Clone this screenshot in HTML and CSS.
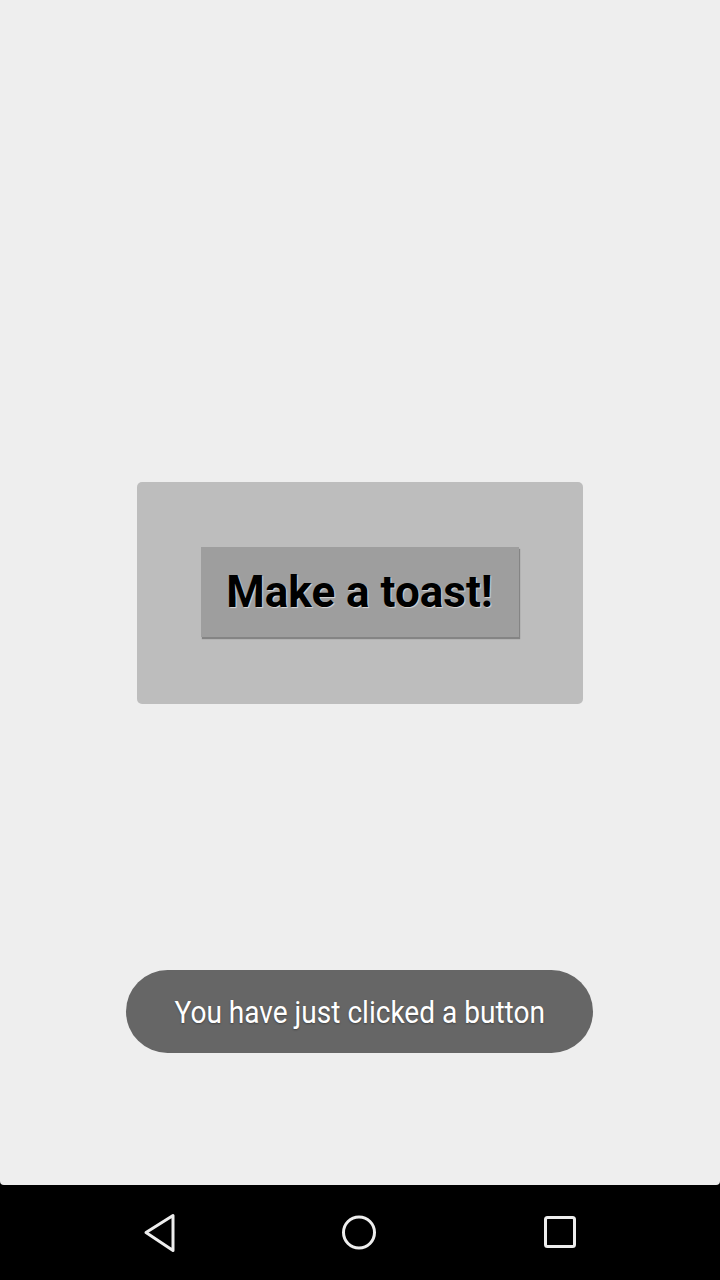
FILE: index.html
```html
<!DOCTYPE html>
<html>
<head>
<meta charset="utf-8">
<link rel="stylesheet" href="styles.css">
</head>
<body>
<div class="screen">
  <div class="card">
    <button class="toast-btn">Make a toast!</button>
  </div>
  <div class="toast"><span class="toast-text">You have just clicked a button</span></div>
</div>
<nav class="navbar">
  <svg class="nav-icon" width="40" height="40" viewBox="0 0 40 40">
    <path d="M33 2.5 L33 37.5 L6 19.5 Z" fill="none" stroke="#eeeeee" stroke-width="3" stroke-linejoin="round"/>
  </svg>
  <svg class="nav-icon" width="40" height="40" viewBox="0 0 40 40">
    <circle cx="19" cy="19.5" r="15.5" fill="none" stroke="#eeeeee" stroke-width="3"/>
  </svg>
  <svg class="nav-icon" width="40" height="40" viewBox="0 0 40 40">
    <rect x="5.5" y="4.5" width="29" height="29" rx="2" fill="none" stroke="#eeeeee" stroke-width="3"/>
  </svg>
</nav>
</body>
</html>
```
FILE: styles.css
```css
html, body {
  margin: 0;
  padding: 0;
  background: #000000;
  width: 720px;
  height: 1280px;
  overflow: hidden;
  font-family: Roboto, "Noto Sans", sans-serif;
}

.screen {
  position: relative;
  height: 1185px;
  background: #eeeeee;
  border-radius: 0 0 4px 4px;
  display: flex;
  align-items: center;
  justify-content: center;
}

.card {
  width: 446px;
  height: 222px;
  background: #bdbdbd;
  border-radius: 5px;
  display: flex;
  align-items: center;
  justify-content: center;
}

.toast-btn {
  width: 318px;
  height: 90px;
  margin-left: -1px;
  margin-top: -2px;
  border: none;
  background: #9e9e9e;
  box-shadow: 1px 2px 1px rgba(0, 0, 0, 0.3);
  font-family: Roboto, sans-serif;
  font-weight: 700;
  font-size: 44px;
  color: #000000;
  text-shadow: 1px 1px 1px rgba(255, 255, 255, 0.6);
  padding: 0;
}

.toast {
  position: absolute;
  left: 126px;
  top: 970px;
  width: 467px;
  height: 83px;
  border-radius: 42px;
  background: #666666;
  display: flex;
  align-items: center;
  justify-content: center;
}

.toast-text {
  font-family: Roboto, sans-serif;
  font-size: 31px;
  color: #ffffff;
  display: inline-block;
  white-space: nowrap;
  transform: scaleX(0.905);
  text-shadow: 0 1px 2px rgba(0, 0, 0, 0.35);
  margin-top: 2px;
}

.navbar {
  height: 95px;
  display: flex;
  align-items: center;
  justify-content: center;
  gap: 160px;
}

.nav-icon {
  display: block;
}
```
